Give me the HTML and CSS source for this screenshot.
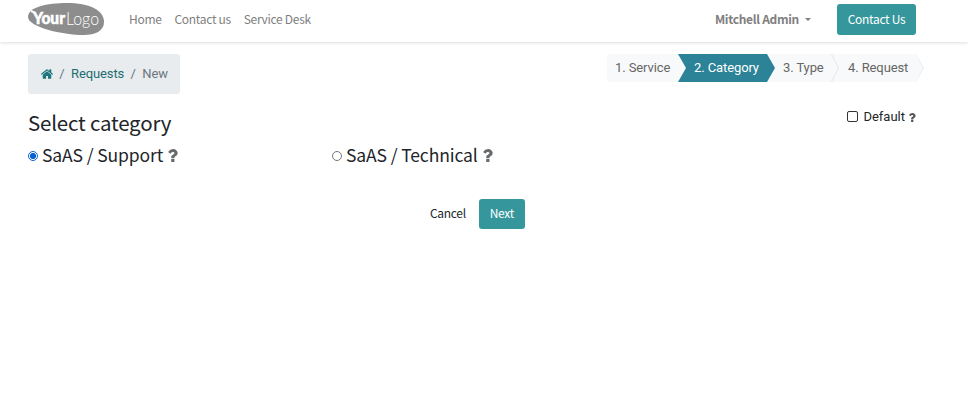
FILE: index.html
```html
<!DOCTYPE html>
<html lang="en">
<head>
<meta charset="utf-8">
<title>Select category</title>
<link rel="stylesheet" href="styles.css">
</head>
<body>
<svg class="defs" aria-hidden="true">
<symbol id="question" viewBox="384 256 1024 1280"><path d="M1088 1256v240q0 16-12 28t-28 12h-240q-16 0-28-12t-12-28v-240q0-16 12-28t28-12h240q16 0 28 12t12 28zm316-600q0 54-15.500 101t-35 76.500-55 59.500-57.500 43.500-61 35.500q-41 23-68.500 65t-27.500 67q0 17-12 32.500t-28 15.500h-240q-15 0-25.500-18.500t-10.500-37.500v-45q0-83 65-156.500t143-108.500q59-27 84-56t25-76q0-42-46.500-74t-107.500-32q-65 0-108 29-35 25-107 115-13 16-31 16-12 0-25-8l-164-125q-13-10-15.500-25t5.500-28q160-266 464-266 80 0 161 31t146 83 106 127.500 41 158.500z"/></symbol>
</svg>
<header class="navbar">
  <a class="logo"><svg width="77" height="34" viewBox="0 0 77 34"><path class="logo-shape" d="M0 15C0 5 19 1 39 1C61 1 76 8 76 20C76 29 67 33 56 33C34 33 0 25 0 15Z"/><path class="logo-tip" d="M3 9L7.500 11"/><text class="logo-bold" x="5" y="22" textLength="32" lengthAdjust="spacingAndGlyphs">Your</text><text class="logo-light" x="38" y="22.500" textLength="33" lengthAdjust="spacingAndGlyphs">Logo</text></svg></a>
  <nav class="menu"><a>Home</a><a>Contact us</a><a>Service Desk</a></nav>
  <a class="user">Mitchell Admin<i class="caret"></i></a>
  <a class="btn contact">Contact Us</a>
</header>
<main>
  <div class="topline">
    <div class="breadcrumb">
      <svg class="home" viewBox="88 256 1616 1280"><path d="M1472 992v480q0 26-19 45t-45 19h-384v-384h-256v384h-384q-26 0-45-19t-19-45v-480q0-1 .5-3t.5-3l575-474 575 474q1 2 1 6zm223-69l-62 74q-8 9-21 11h-3q-13 0-21-7l-692-577-692 577q-12 8-24 7-13-2-21-11l-62-74q-8-10-7-23.500t11-21.500l719-599q32-26 76-26t76 26l244 204v-195q0-14 9-23t23-9h192q14 0 23 9t9 23v408l219 182q10 8 11 21.500t-7 23.500z"/></svg>
      <span class="slash">/</span><a>Requests</a><span class="slash">/</span><span>New</span>
    </div>
    <div class="steps">
      <div class="step service">1. Service</div>
      <div class="step active">2. Category</div>
      <div class="step type">3. Type<svg class="chevron" viewBox="0 0 8 28"><path d="M.5 0L7.500 14L.5 28"/></svg></div>
      <div class="step request">4. Request<svg class="chevron" viewBox="0 0 8 28"><path d="M.5 0L7.500 14L.5 28"/></svg></div>
    </div>
  </div>
  <div class="heading">
    <h1>Select category</h1>
    <label class="default"><i class="box"></i><span>Default</span><svg class="q-small"><use href="#question"/></svg></label>
  </div>
  <div class="options">
    <label><i class="radio checked"></i><span class="support">SaAS / Support</span><svg class="q"><use href="#question"/></svg></label>
    <label><i class="radio"></i><span class="technical">SaAS / Technical</span><svg class="q"><use href="#question"/></svg></label>
  </div>
  <div class="actions"><a class="cancel">Cancel</a><a class="btn next">Next</a></div>
</main>
</body>
</html>
```
FILE: styles.css
```css
* { box-sizing: border-box; }
body { margin: 0; background: #fff; color: #212529; font: 12px/18px "Noto Sans CJK SC", sans-serif; letter-spacing: -.3px; height: 411px; overflow: hidden; }
.defs { display: none; }
svg { display: block; flex: none; }
a, span, label { white-space: nowrap; }
.navbar { display: flex; align-items: center; height: 42px; padding: 0 52px 4px 28px; box-shadow: 0 1px 3px rgba(0,0,0,.14); color: #7f7f7f; }
.logo { width: 101px; letter-spacing: 0; }
.logo-shape { fill: #8d8d8d; }
.logo-tip { stroke: #fff; stroke-width: 2; }
.logo-bold { fill: #fff; stroke: #fff; stroke-width: .5; font: 900 16px Lato, sans-serif; }
.logo-light { fill: #fff; font: 300 18px Lato, sans-serif; }
.menu { display: flex; gap: 12.900px; }
.user { display: flex; align-items: center; margin-left: auto; font-weight: 700; }
.caret { margin-left: 6px; border: 3px solid transparent; border-top-color: currentColor; border-bottom: 0; }
.btn { display: flex; align-items: center; justify-content: center; height: 30px; color: #fff; background: #35979c; border-radius: 3px; }
.contact { width: 79px; height: 31px; margin-left: 26px; }
main { padding: 12px 44px 0 28px; }
.topline { display: flex; justify-content: space-between; font: 13px/28px Roboto, sans-serif; letter-spacing: -.1px; }
.breadcrumb { display: flex; align-items: center; width: 152px; height: 40px; padding-left: 13px; background: #e9ecef; border-radius: 3px; color: #6c757d; }
.breadcrumb a { color: #1e6d72; }
.home { width: 12px; height: 10px; fill: #1f757c; }
.slash { width: 18px; text-align: center; }
.steps { display: flex; height: 28px; color: #666; background: #f8f9fa; border-radius: 3px; clip-path: polygon(0 0, 309px 0, 100% 50%, 309px 100%, 0 100%); width: 317px; }
.step { position: relative; height: 28px; }
.service { width: 71px; padding-left: 8px; }
.active { width: 97px; padding-left: 16px; background: #2c8397; color: #fff; clip-path: polygon(0 0, 89px 0, 100% 50%, 89px 100%, 0 100%, 8px 50%); }
.type { width: 64px; padding-left: 8px; }
.request { width: 85px; padding-left: 9px; }
.chevron { position: absolute; top: 0; right: 0; width: 8px; height: 28px; fill: none; stroke: #e5e7e9; }
.heading { display: flex; justify-content: space-between; height: 49px; padding: 13px 8px 0 0; }
h1 { margin: 0; font-size: 20.500px; line-height: 30px; font-weight: 400; letter-spacing: -.2px; }
.default { display: flex; align-items: center; height: 20px; font: 13px/18px Roboto, sans-serif; letter-spacing: 0; }
.box { width: 11px; height: 11px; margin: 0 5px 2px 0; border: 1px solid #333; border-radius: 2px; }
.q-small { width: 8px; height: 9px; margin-left: 3px; fill: #555; }
.options { display: grid; grid-template-columns: 304px 304px; height: 24px; font-size: 17.500px; letter-spacing: -.12px; }
.options label { display: flex; align-items: center; line-height: 24px; }
.radio { width: 10px; height: 10px; margin: 1px 4px 0 0; border: 1px solid #767676; border-radius: 50%; }
.checked { border-color: #0b63ce; background: radial-gradient(circle, #0b63ce 0 2.800px, #fff 3.300px); }
.q { width: 11px; height: 13px; margin-left: 4px; fill: #666a6d; }
.actions { display: flex; align-items: center; margin: 32px 0 0 402px; gap: 13px; }
.cancel, .next { padding-bottom: 2px; }
.next { width: 46px; }
```
